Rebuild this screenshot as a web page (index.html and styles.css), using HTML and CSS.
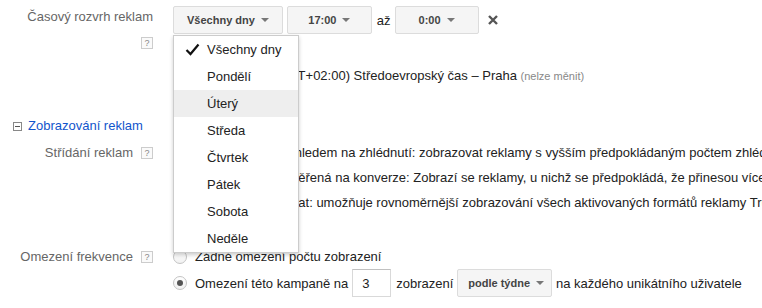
FILE: index.html
```html
<!DOCTYPE html>
<html lang="cs">
<head>
  <meta charset="UTF-8">
  <title>Nastavení kampaně</title>
  <link rel="stylesheet" href="styles.css">
</head>
<body>
<div class="page">
  <div class="row">
    <div class="label-col">
      <div class="label label-top">Časový rozvrh reklam</div>
      <span class="help">?</span>
    </div>
    <div class="field">
      <div class="toolbar">
        <div class="menu-wrap">
          <button class="btn">Všechny dny <span class="caret"></span></button>
          <ul class="menu">
            <li class="checked">
              <svg class="check" width="15" height="13" viewBox="0 0 15 13">
                <path d="M1.5 7 L5.5 11 L13.5 1.5" stroke="#111" stroke-width="2.2" fill="none"/>
              </svg>
              Všechny dny
            </li>
            <li>Pondělí</li>
            <li class="hover">Úterý</li>
            <li>Středa</li>
            <li>Čtvrtek</li>
            <li>Pátek</li>
            <li>Sobota</li>
            <li>Neděle</li>
          </ul>
        </div>
        <button class="btn btn-wide">17:00 <span class="caret"></span></button>
        <span class="to">až</span>
        <button class="btn">0:00 <span class="caret"></span></button>
        <svg class="remove" width="10" height="10" viewBox="0 0 10 10">
          <path d="M1 1 L9 9 M9 1 L1 9" stroke="#555" stroke-width="2.4" fill="none"/>
        </svg>
      </div>
      <div class="tz">
        <span class="tz-label">Časové pásmo:</span>(GMT+02:00) Středoevropský čas – Praha <span class="note">(nelze měnit)</span>
      </div>
    </div>
  </div>

  <div class="section">
    <span class="toggle"></span>
    <a href="#">Zobrazování reklam</a>
  </div>

  <div class="row row-rotation">
    <div class="label-col inline">
      <span class="label">Střídání reklam</span>
      <span class="help">?</span>
    </div>
    <div class="field">
      <label class="opt"><span class="radio on"></span>Optimalizovat s ohledem na zhlédnutí: zobrazovat reklamy s vyšším předpokládaným počtem zhlédnutí</label>
      <label class="opt"><span class="radio"></span>Optimalizace zaměřená na konverze: Zobrazí se reklamy, u nichž se předpokládá, že přinesou více konverzí</label>
      <label class="opt"><span class="radio"></span>Rovnoměrně střídat: umožňuje rovnoměrnější zobrazování všech aktivovaných formátů reklamy TrueView</label>
    </div>
  </div>

  <div class="row row-freq">
    <div class="label-col inline">
      <span class="label">Omezení frekvence</span>
      <span class="help">?</span>
    </div>
    <div class="field">
      <label class="opt"><span class="radio"></span>Žádné omezení počtu zobrazení</label>
      <label class="opt opt-tall"><span class="radio on"></span>Omezení této kampaně na
        <input class="num" type="text" value="3">
        <span class="after-num">zobrazení</span>
        <button class="btn btn-small">podle týdne <span class="caret"></span></button>
        <span class="after-btn">na každého unikátního uživatele</span>
      </label>
    </div>
  </div>
</div>
</body>
</html>
```

FILE: styles.css
```css
* {
  margin: 0;
  padding: 0;
  box-sizing: border-box;
}

body {
  font-family: "Liberation Sans", Arial, sans-serif;
  font-size: 13px;
  color: #222;
  background: #fff;
  overflow: hidden;
}

.page {
  padding-top: 6px;
}

.row {
  display: grid;
  grid-template-columns: 153px 1fr;
  column-gap: 20px;
}

.label-col {
  text-align: right;
}

.label-col.inline {
  display: flex;
  justify-content: flex-end;
  align-items: center;
  gap: 8px;
  height: 25px;
}

.label {
  color: #666;
  line-height: 16px;
}

.label-top {
  padding-top: 3px;
}

.help {
  display: inline-block;
  width: 12px;
  height: 12px;
  border: 1px solid #ccc;
  background: #fafafa;
  color: #888;
  font-size: 9px;
  line-height: 10px;
  text-align: center;
}

.label-top + .help {
  margin-top: 12px;
}

/* top toolbar */
.toolbar {
  display: flex;
  align-items: center;
  gap: 4px;
  height: 28px;
}

.btn {
  display: inline-flex;
  align-items: center;
  justify-content: center;
  gap: 6px;
  height: 28px;
  min-width: 84px;
  padding: 0 13px;
  border: 1px solid #dcdcdc;
  border-radius: 2px;
  background: #f5f5f5;
  color: #444;
  font-family: inherit;
  font-size: 11px;
  font-weight: bold;
}

.btn-wide {
  min-width: 85px;
}

.btn-small {
  min-width: 0;
  margin-left: -4px;
  padding: 0 7px 0 10px;
}

.caret {
  width: 0;
  height: 0;
  border-left: 4px solid transparent;
  border-right: 4px solid transparent;
  border-top: 4px solid #777;
}

.to {
  margin-left: 1px;
}

.remove {
  margin-left: 5px;
}

.menu-wrap {
  position: relative;
}

.menu {
  position: absolute;
  top: 29px;
  left: 0;
  width: 126px;
  list-style: none;
  background: #fff;
  border: 1px solid rgba(0, 0, 0, .2);
  box-shadow: 0 2px 4px rgba(0, 0, 0, .2);
  z-index: 10;
}

.menu li {
  position: relative;
  height: 27px;
  line-height: 27px;
  padding-left: 33px;
  color: #222;
  white-space: nowrap;
}

.menu li.hover {
  background: #eee;
}

.check {
  position: absolute;
  left: 11px;
  top: 7px;
}

.tz {
  margin-top: 34px;
  line-height: 16px;
  white-space: nowrap;
}

.tz-label {
  margin-right: 9px;
}

.note {
  color: #888;
  font-size: 11px;
}

/* sections */
.section {
  display: flex;
  align-items: center;
  gap: 6px;
  margin-top: 34px;
  padding-left: 13px;
  line-height: 16px;
}

.toggle {
  position: relative;
  width: 9px;
  height: 9px;
  border: 1px solid #888;
}

.toggle::after {
  content: "";
  position: absolute;
  left: 1px;
  top: 3px;
  width: 5px;
  height: 1px;
  background: #555;
}

.section a {
  color: #15c;
  text-decoration: none;
}

.row-rotation {
  margin-top: 6px;
}

.row-freq {
  margin-top: 29px;
}

.opt {
  display: flex;
  align-items: center;
  gap: 8px;
  height: 25px;
  white-space: nowrap;
}

.opt-tall {
  height: 28px;
}

.radio {
  flex: none;
  position: relative;
  width: 14px;
  height: 14px;
  border: 1px solid #c4c4c4;
  border-radius: 50%;
  background: linear-gradient(#fff, #f1f1f1);
}

.radio.on::after {
  content: "";
  position: absolute;
  left: 3px;
  top: 3px;
  width: 6px;
  height: 6px;
  border-radius: 50%;
  background: #555;
}

.num {
  width: 39px;
  height: 28px;
  margin-left: -4px;
  padding-left: 9px;
  border: 1px solid #d9d9d9;
  border-top-color: #c0c0c0;
  font-family: inherit;
  font-size: 13px;
  color: #222;
}

.after-num {
  margin-left: -3px;
}

.after-btn {
  margin-left: -4px;
}
```
